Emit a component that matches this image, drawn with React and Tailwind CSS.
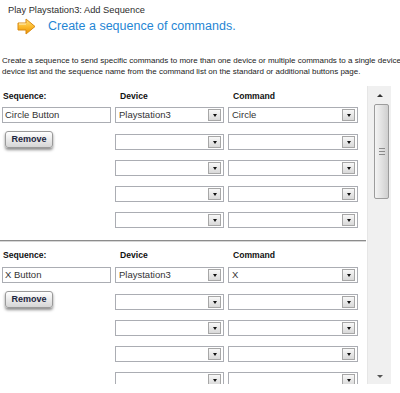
import React from 'react'

const sections = [
  { name: 'Circle Button', device: 'Playstation3', command: 'Circle', first: true },
  { name: 'X Button', device: 'Playstation3', command: 'X', first: false },
]

function Arrow() {
  return (
    <svg width="19" height="17" viewBox="0 0 19 17">
      <defs>
        <linearGradient id="arr" x1="0" y1="0" x2="0" y2="1">
          <stop offset="0" stopColor="#ffe27a" />
          <stop offset="0.55" stopColor="#fbb829" />
          <stop offset="1" stopColor="#e88f00" />
        </linearGradient>
      </defs>
      <path
        d="M1 5 L9 5 L9 1 L18 8.5 L9 16 L9 12 L1 12 Z"
        fill="url(#arr)"
        stroke="#d98a12"
        strokeWidth="1"
        strokeLinejoin="round"
      />
      <path d="M2 6 L9 6" stroke="#fff3c4" strokeWidth="1" />
    </svg>
  )
}

function Select({ value, wide }) {
  return (
    <div
      className={`relative h-[16px] border border-[#abadb3] bg-white flex items-center pl-[3px] text-[9.5px] text-[#333] ${wide ? 'w-[130px]' : 'w-[109px]'}`}
    >
      <span>{value}</span>
      <div className="absolute right-[2px] top-[1px] w-[13px] h-[12px] border border-[#a7a7a7] bg-gradient-to-b from-[#f8f8f8] to-[#d9d9d9] flex items-center justify-center">
        <div className="mt-[1px] w-0 h-0 border-l-[2.5px] border-r-[2.5px] border-t-[3px] border-l-transparent border-r-transparent border-t-[#111]" />
      </div>
    </div>
  )
}

function Section({ s }) {
  const rows = [0, 1, 2, 3, 4]
  return (
    <div className={`flex pl-[2px] ${s.first ? 'pt-[4px]' : 'pt-[7px]'}`}>
      <div className="w-[113px] flex flex-col">
        <div className="h-[12px] leading-[12px] pl-[1px] text-[8.6px] font-bold text-[#111]">Sequence:</div>
        <div
          className={`${s.first ? 'mt-[5px]' : 'mt-[6px]'} w-[109px] h-[16px] border border-[#abadb3] bg-white flex items-center pl-[2px] text-[9.5px] text-[#333]`}
        >
          {s.name}
        </div>
        <button className="mt-[8px] ml-[3px] w-[48px] h-[17px] rounded-[3px] border border-[#9a9a9a] bg-gradient-to-b from-[#ffffff] to-[#d6d6d6] shadow-[0_2px_3px_rgba(0,0,0,0.45)] text-[9px] font-bold text-[#1c2540] flex items-center justify-center">
          Remove
        </button>
      </div>
      <div className="w-[113px] flex flex-col">
        <div className="h-[12px] leading-[12px] pl-[5px] text-[8.6px] font-bold text-[#111]">Device</div>
        <div className={`${s.first ? 'mt-[5px]' : 'mt-[6px]'} flex flex-col gap-[10px]`}>
          {rows.map((i) => (
            <div key={i} className={i === 0 ? 'mb-[1px]' : ''}>
              <Select value={i === 0 ? s.device : ''} />
            </div>
          ))}
        </div>
      </div>
      <div className="w-[130px] flex flex-col">
        <div className="h-[12px] leading-[12px] pl-[5px] text-[8.6px] font-bold text-[#111]">Command</div>
        <div className={`${s.first ? 'mt-[5px]' : 'mt-[6px]'} flex flex-col gap-[10px]`}>
          {rows.map((i) => (
            <div key={i} className={i === 0 ? 'mb-[1px]' : ''}>
              <Select value={i === 0 ? s.command : ''} wide />
            </div>
          ))}
        </div>
      </div>
    </div>
  )
}

export default function App() {
  return (
    <div className="w-[400px] h-[393px] overflow-hidden bg-white font-['Liberation_Sans',Arial,sans-serif] text-[#333]">
      <div className="pt-[4px] pl-[8px] leading-[12px] text-[9.3px] text-[#2e2e2e]">
        Play Playstation3: Add Sequence
      </div>
      <div className="mt-[2px] h-[17px] flex items-center pl-[17px] gap-[12px]">
        <Arrow />
        <span className="text-[12.5px] text-[#1f86d4] leading-[17px]">Create a sequence of commands.</span>
      </div>
      <div className="mt-[20px] pl-[2px] text-[8px] leading-[11px] text-[#222]">
        <div className="whitespace-nowrap">
          Create a sequence to send specific commands to more than one device or multiple commands to a single device
        </div>
        <div className="whitespace-nowrap">
          device list and the sequence name from the command list on the standard or additional buttons page.
        </div>
      </div>
      <div className="mt-[9px] h-[298px] flex">
        <div className="w-[367px] overflow-hidden">
          <Section s={sections[0]} />
          <div className="mt-[12px] h-[2px] border-t border-[#8c8c8c] border-b border-b-[#d6d6d6] mr-[1px]" />
          <Section s={sections[1]} />
        </div>
        <div className="w-[24px] bg-[#f0f0f0] border-l border-[#e6e6e6] flex flex-col items-center">
          <div className="h-[18px] w-full flex items-center justify-center">
            <div className="w-0 h-0 border-l-[3px] border-r-[3px] border-b-[3px] border-l-transparent border-r-transparent border-b-[#333]" />
          </div>
          <div className="ml-[4px] w-[15px] h-[95px] rounded-[2px] border border-[#9c9c9c] bg-gradient-to-r from-[#f4f4f4] via-[#e2e2e2] to-[#cfcfcf] flex flex-col items-center justify-center gap-[2px]">
            <div className="w-[6px] h-px bg-[#8a8a8a]" />
            <div className="w-[6px] h-px bg-[#8a8a8a]" />
            <div className="w-[6px] h-px bg-[#8a8a8a]" />
          </div>
          <div className="flex-1" />
          <div className="h-[16px] w-full flex items-center justify-center">
            <div className="w-0 h-0 border-l-[3px] border-r-[3px] border-t-[3px] border-l-transparent border-r-transparent border-t-[#555]" />
          </div>
        </div>
      </div>
    </div>
  )
}
